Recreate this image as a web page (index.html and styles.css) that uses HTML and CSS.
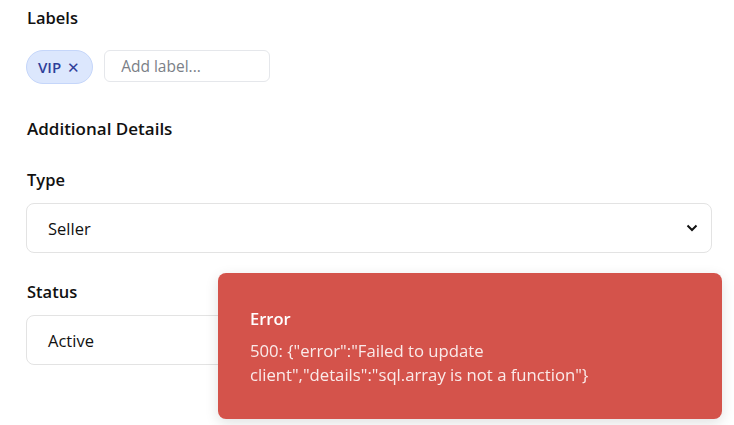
FILE: index.html
```html
<!DOCTYPE html>
<html>
<head>
<meta charset="utf-8">
<link rel="stylesheet" href="styles.css">
</head>
<body>
<div class="page">
  <section class="field">
    <div class="label">Labels</div>
    <div class="chips">
      <span class="chip">VIP <span class="chip-x">&#x2715;</span></span>
      <input class="label-input" type="text" placeholder="Add label...">
    </div>
  </section>
  <h3 class="section-title">Additional Details</h3>
  <section class="field">
    <div class="label">Type</div>
    <div class="select"><span>Seller</span>
      <svg class="chev" width="12" height="8" viewBox="0 0 12 8"><path d="M1.5 1.5 L6 6 L10.5 1.5" fill="none" stroke="#111" stroke-width="2"/></svg>
    </div>
  </section>
  <section class="field">
    <div class="label">Status</div>
    <div class="select"><span>Active</span>
      <svg class="chev" width="12" height="8" viewBox="0 0 12 8"><path d="M1.5 1.5 L6 6 L10.5 1.5" fill="none" stroke="#111" stroke-width="2"/></svg>
    </div>
  </section>
</div>
<div class="toast">
  <div class="toast-title">Error</div>
  <div class="toast-msg">500: {"error":"Failed to update client","details":"sql.array is not a function"}</div>
</div>
</body>
</html>
```
FILE: styles.css
```css
* { box-sizing: border-box; }
html, body { margin: 0; background: #fff; }
body {
  font-family: "Open Sans", "Noto Sans", sans-serif;
  color: #111;
  overflow: hidden;
}
.page {
  padding: 6px 22px 0 26px;
  display: flex;
  flex-direction: column;
}
.label {
  font-size: 16.5px;
  font-weight: 600;
  line-height: 24px;
  padding-left: 1px;
}
.chips {
  margin-top: 20px;
  display: flex;
  align-items: center;
  gap: 10px;
}
.chip {
  display: inline-flex;
  align-items: center;
  gap: 6px;
  height: 34px;
  padding: 0 12px 0 11px;
  border-radius: 17px;
  background: #dce7fd;
  border: 1px solid #c5d6fa;
  color: #2f3f9a;
  font-size: 15px;
  font-weight: 600;
}
.chip-x { font-weight: 400; font-size: 15px; }
.label-input {
  width: 166px;
  height: 32px;
  border: 1px solid #e5e7eb;
  border-radius: 6px;
  padding: 0 16px;
  font-family: inherit;
  font-size: 15.5px;
  margin-top: -2px;
  margin-left: 1px;
}
.label-input::placeholder { color: #7b7f87; }
.section-title {
  margin: 33px 0 0;
  font-size: 17px;
  font-weight: 600;
  line-height: 24px;
  padding-left: 1px;
}
.field + .field { margin-top: 27px; }
.section-title + .field { margin-top: 27px; }
.select {
  margin-top: 11px;
  height: 50px;
  border: 1px solid #e3e3e3;
  border-radius: 8px;
  display: flex;
  align-items: center;
  justify-content: space-between;
  padding: 0 13px 0 21px;
  font-size: 16.5px;
}
.toast {
  position: fixed;
  right: 12px;
  bottom: 6px;
  width: 504px;
  height: 146px;
  background: #d4534b;
  border-radius: 8px;
  box-shadow: 0 4px 14px rgba(0,0,0,0.12);
  padding: 32px 32px;
  color: #fff;
}
.toast-title {
  font-size: 16.5px;
  font-weight: 600;
  line-height: 28px;
}
.toast-msg {
  margin-top: 6px;
  max-width: 400px;
  font-size: 16.7px;
  line-height: 24px;
  color: rgba(255,255,255,0.88);
}
```
